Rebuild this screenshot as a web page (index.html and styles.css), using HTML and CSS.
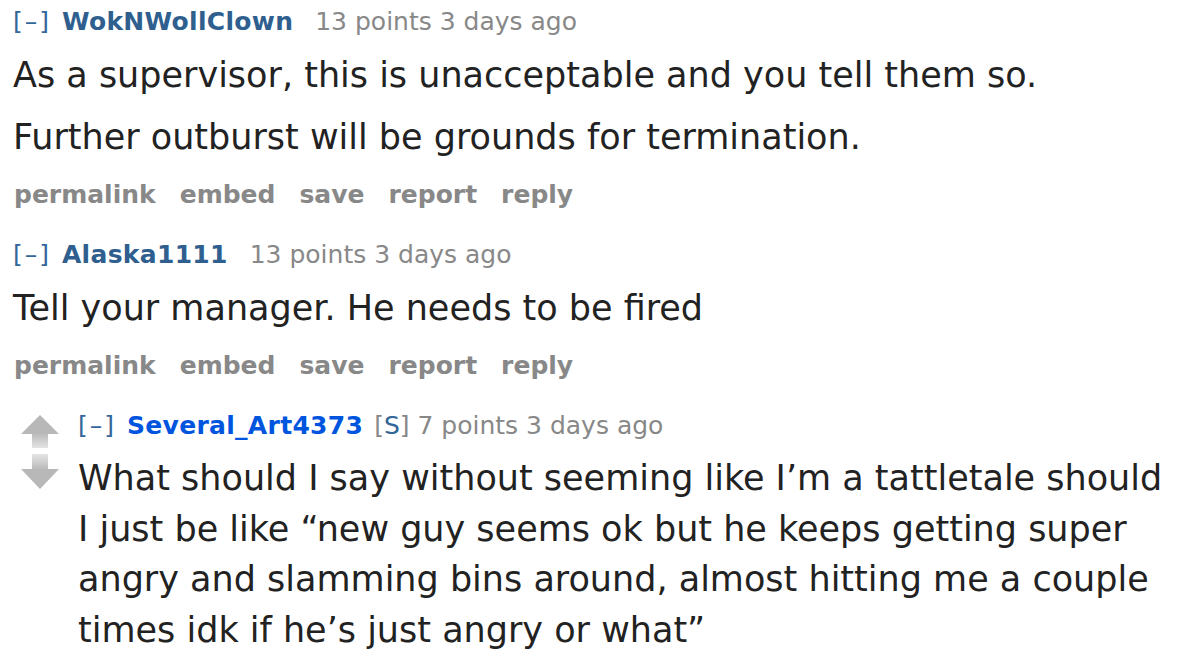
FILE: index.html
```html
<!DOCTYPE html>
<html>
<head>
<meta charset="utf-8">
<link rel="stylesheet" href="styles.css">
</head>
<body>
<div class="thread">
  <div class="comment">
    <div class="tagline"><span class="expand">[–]</span> <span class="author">WokNWollClown</span> <span class="score">13 points</span> <span class="time">3 days ago</span></div>
    <div class="md">
      <p>As a supervisor, this is unacceptable and you tell them so.</p>
      <p>Further outburst will be grounds for termination.</p>
    </div>
    <ul class="buttons"><li>permalink</li><li>embed</li><li>save</li><li>report</li><li>reply</li></ul>
  </div>
  <div class="comment">
    <div class="tagline"><span class="expand">[–]</span> <span class="author">Alaska1111</span> <span class="score">13 points</span> <span class="time">3 days ago</span></div>
    <div class="md">
      <p>Tell your manager. He needs to be fired</p>
    </div>
    <ul class="buttons"><li>permalink</li><li>embed</li><li>save</li><li>report</li><li>reply</li></ul>
  </div>
  <div class="comment nested">
    <div class="midcol">
      <svg class="arrows" width="40" height="76" viewBox="0 0 40 76">
        <defs>
          <linearGradient id="shaftUp" x1="0" y1="0" x2="0" y2="1">
            <stop offset="0" stop-color="#b8b8b8"/>
            <stop offset="1" stop-color="#e4e4e4"/>
          </linearGradient>
          <linearGradient id="shaftDown" x1="0" y1="0" x2="0" y2="1">
            <stop offset="0" stop-color="#e4e4e4"/>
            <stop offset="1" stop-color="#b8b8b8"/>
          </linearGradient>
        </defs>
        <polygon points="20,0 39,19 1,19" fill="#b8b8b8"/>
        <rect x="12" y="18" width="16" height="15" fill="url(#shaftUp)"/>
        <rect x="12" y="39" width="16" height="16" fill="url(#shaftDown)"/>
        <polygon points="1,54 39,54 20,74" fill="#b8b8b8"/>
      </svg>
    </div>
    <div class="entry">
      <div class="tagline"><span class="expand">[–]</span> <span class="author submitter">Several_Art4373</span> <span class="flag">[<span class="s">S</span>]</span> <span class="score">7 points</span> <span class="time">3 days ago</span></div>
      <div class="md">
        <p>What should I say without seeming like I’m a tattletale should I just be like “new guy seems ok but he keeps getting super angry and slamming bins around, almost hitting me a couple times idk if he’s just angry or what”</p>
      </div>
    </div>
  </div>
</div>
</body>
</html>
```
FILE: styles.css
```css
html, body {
  margin: 0;
  padding: 0;
  background: #ffffff;
}
body {
  font-family: "DejaVu Sans", Verdana, sans-serif;
  color: #222222;
}
.thread {
  padding: 4px 0 0 13px;
}
.tagline {
  font-size: 25px;
  line-height: 36px;
  color: #888888;
  white-space: nowrap;
}
.expand {
  color: #336699;
  letter-spacing: 2px;
  margin-right: 3px;
}
.author {
  color: #2f5f8f;
  font-weight: bold;
  letter-spacing: 0.3px;
  margin-right: 14px;
}
.author.submitter {
  color: #0055df;
  margin-right: 3px;
}
.flag {
  color: #888888;
}
.flag .s {
  color: #336699;
}
.md {
  font-size: 35px;
  color: #222222;
}
.md p {
  margin: 10px 0 0;
  line-height: 50px;
}
.md p + p {
  margin-top: 12px;
}
.buttons {
  list-style: none;
  margin: 15px 0 0;
  padding: 0 0 0 1px;
  display: flex;
  gap: 24px;
  font-size: 25px;
  font-weight: bold;
  color: #888888;
  line-height: 36px;
}
.comment + .comment {
  margin-top: 24px;
}
.nested {
  display: flex;
  padding-left: 7px;
}
.midcol {
  width: 58px;
  flex: none;
  padding-top: 7px;
}
.arrows {
  display: block;
}
.entry {
  flex: none;
  width: 1096px;
}
.entry .md p {
  margin-top: 9px;
  line-height: 50.5px;
}
```
